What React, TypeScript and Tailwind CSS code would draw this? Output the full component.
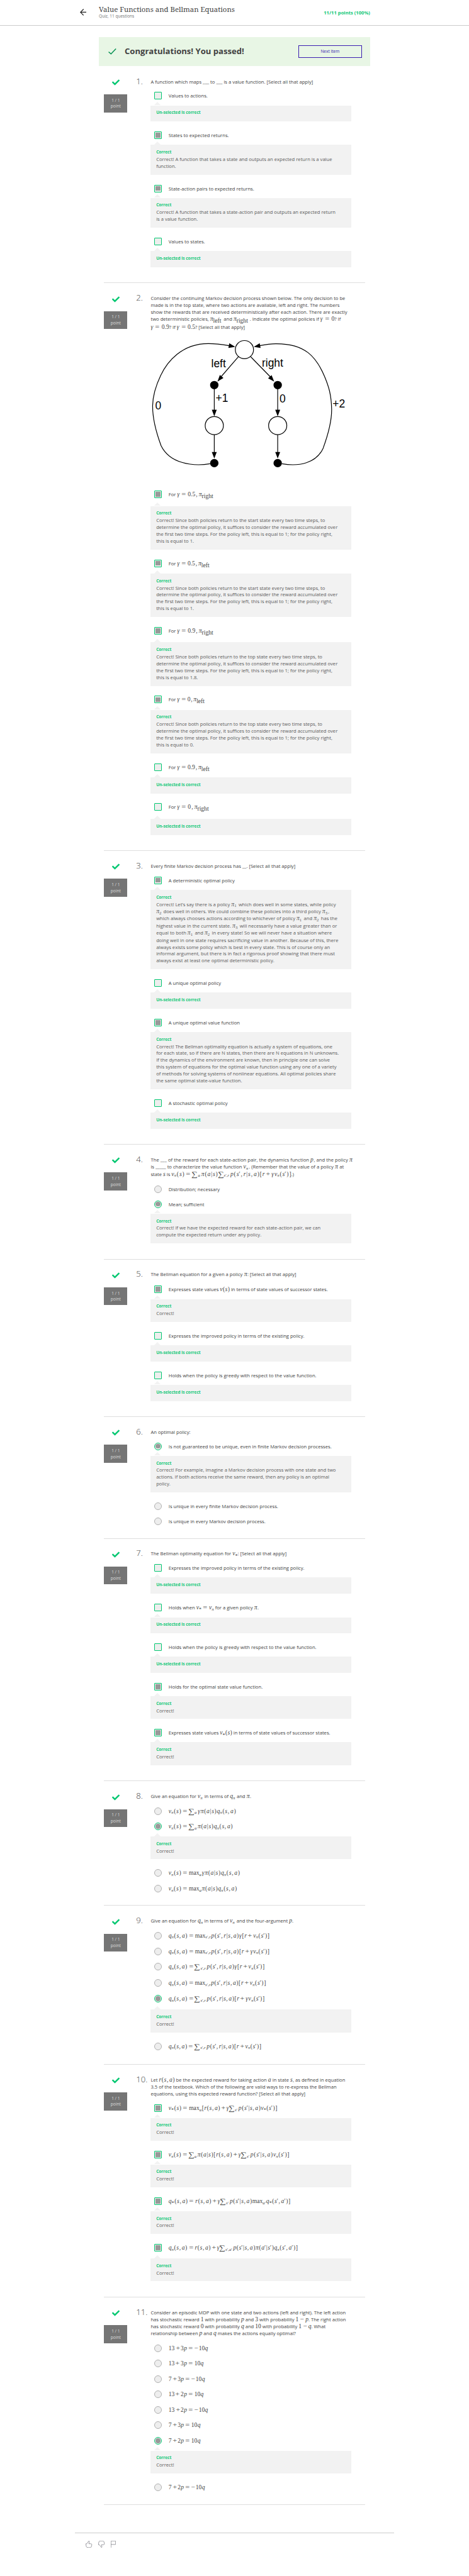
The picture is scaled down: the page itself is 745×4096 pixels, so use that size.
import React from "react";
import { FaCheck } from "react-icons/fa";

/* ---------- math typesetting ---------- */

const ATOM = /(max|left|right|\d+(?:\.\d+)?|[^\s_])(′?)(?:_(?:\{([^}]*)\}|(\S)))?/g;

function Glyph({ t }: { t: string }) {
  if (t === "=") return <span className="mx-[2.8px] inline-block scale-x-[1.3]">=</span>;
  if (t === "+") return <span className="mx-[1.8px] inline-block scale-x-[1.3]">+</span>;
  if (t === "−") return <span className="mx-[0.6px] inline-block scale-x-[1.2]">−</span>;
  if (t === ",") return <span className="mr-[1px]">,</span>;
  if (t === "∑") return <span className="mr-[0.8px] inline-block translate-y-[0.6px] scale-x-[1.2] text-[11.4px]">∑</span>;
  if (/^[a-zπγ]$/.test(t)) return <span className="italic">{t}</span>;
  return <span>{t}</span>;
}

function Sub({ t }: { t: string }) {
  if (t === "left" || t === "right") return <span className="relative top-[3px]">{t}</span>;
  return (
    <span className={t === "*" ? "relative top-[3.4px] text-[8px]" : "relative top-[1.8px] text-[6.8px]"}>
      {t.split("").map((c, i) => (
        <span key={i} className={/[a-zπ]/.test(c) ? "italic" : ""}>{c}</span>
      ))}
    </span>
  );
}

function M({ t, w = "" }: { t: string; w?: string }) {
  const atoms = [...t.matchAll(ATOM)];
  return (
    <span className={`inline-flex items-baseline justify-between whitespace-nowrap font-['Liberation_Serif',serif] text-[9.6px] leading-[0] ${w}`}>
      {atoms.map((a, i) => (
        <span key={i} className={a[1] === "∑" ? "mr-[1px]" : ""}>
          <Glyph t={a[1]} />
          {a[2]}
          {(a[3] || a[4]) && <Sub t={a[3] || a[4]} />}
        </span>
      ))}
    </span>
  );
}

/* ---------- building blocks ---------- */

type Line = React.ReactNode | [string, React.ReactNode];

function Lines({ lines }: { lines: Line[] }) {
  return (
    <>
      {lines.map((l, i) => {
        const tall = Array.isArray(l);
        return (
          <p key={i} className={`whitespace-nowrap leading-[10.9px] ${tall ? l[0] : "h-[10.9px]"}`}>
            {tall ? l[1] : l}
          </p>
        );
      })}
    </>
  );
}

function Feedback({ title, lines = [] }: { title: string; lines?: Line[] }) {
  return (
    <div className="relative mb-[15.81px] w-[318.5px] bg-[#f2f2f2] pt-[6.7px] pr-4 pb-[8.02px] pl-[8.7px] text-[#5a5a5a]">
      <span className="absolute -top-[5.45px] left-[5.8px] h-0 w-0 border-x-[5.45px] border-b-[5.45px] border-x-transparent border-b-[#f2f2f2]" />
      <p className="h-[10.9px] text-[6.54px] leading-[10.9px] font-bold text-[#10c877]">{title}</p>
      <Lines lines={lines} />
    </div>
  );
}

type OptionProps = {
  radio?: boolean;
  on?: boolean;
  h?: string;
  label: React.ReactNode;
  correct?: Line[];
  off?: boolean;
};

function Option({ radio, on, h = "h-[21.26px]", label, correct, off }: OptionProps) {
  const shape = radio ? "rounded-full" : "rounded-[1px]";
  const border = radio && !on ? "border-[0.6px] border-[#b0b0b0]" : "border-[1.1px] border-[#00c770]";
  return (
    <>
      <div className={`flex items-start ${h}`}>
        <span className={`ml-[5.45px] flex h-[12px] w-[12px] shrink-0 items-center justify-center bg-[#eeeeee] ${border} ${shape}`}>
          {on && <span className={`h-[7.6px] w-[7.6px] bg-[#999999] ${radio ? "rounded-full" : ""}`} />}
        </span>
        <span className="ml-[10.9px] h-[12px] whitespace-nowrap leading-[12px]">{label}</span>
      </div>
      {correct && <Feedback title="Correct" lines={correct} />}
      {off && <Feedback title="Un-selected is correct" />}
    </>
  );
}

function Question({ n, prompt, figure, children }: { n: number; prompt: Line[]; figure?: React.ReactNode; children: React.ReactNode }) {
  return (
    <section className="border-b-[1px] border-[#dedede] pt-[18.63px] pb-[8.72px]">
      <div className="flex items-start">
        <div className="flex w-[37.1px] shrink-0 flex-col items-center pt-[0.6px]">
          <FaCheck className="h-[12px] w-[12px] text-[#00c770]" />
          <div className="mt-[13.2px] flex h-[28.3px] w-full flex-col items-center justify-center bg-[#757575] text-[6.54px] leading-[9.8px] text-[#dedede]">
            <span>1 / 1</span>
            <span>point</span>
          </div>
        </div>
        <div className="ml-[14px] w-[23.1px] shrink-0 whitespace-nowrap text-[13.1px] leading-[8.83px] font-light">{n}.</div>
        <div className="w-[318.5px]">
          <div className={figure ? "" : "mb-[11.1px]"}>
            <Lines lines={prompt} />
          </div>
          {figure}
          {children}
        </div>
      </div>
    </section>
  );
}

/* ---------- transition graph ---------- */

function Graph() {
  return (
    <svg viewBox="439 963.6 584 445" preserveAspectRatio="none" className="mb-[12px] block h-[242.6px] w-[318.5px] font-['Liberation_Sans',sans-serif]">
      <g fill="none" stroke="#000" strokeWidth="2.2">
        <circle cx="712.7" cy="1018.5" r="26.5" />
        <circle cx="624.9" cy="1240.1" r="26.5" />
        <circle cx="809.6" cy="1240.1" r="26.5" />
        <path d="M695.3 1039.2L640 1103M731 1039.2L793 1103M624.9 1122V1200M809.6 1122V1200M624.9 1266.6V1325M809.6 1266.6V1325" />
        <path d="M612.7 1351.5C560 1360 495 1350 470 1298.7C452 1250 445 1215 445.3 1182C446 1150 454 1125 468.8 1094C487 1055 530 1000 609 1001C630 1001 650 1004 668 1007" />
        <path d="M821.8 1351.5C872 1360 922 1350 942 1306C958 1262 967 1225 966.7 1193C966 1150 958 1125 945.8 1096C922 1040 890 1001 805.5 1001.3C788 1001 772 1004 757 1007" />
      </g>
      <g fill="#000">
        <circle cx="624.9" cy="1121.9" r="12.2" />
        <circle cx="809.6" cy="1121.9" r="12.2" />
        <circle cx="624.9" cy="1349.5" r="12.2" />
        <circle cx="809.6" cy="1349.5" r="12.2" />
        <path d="M634.1 1111.5L641.2 1092.4L651.6 1101.2ZM799.4 1111.5L791.8 1093L781.6 1102Z" />
        <path d="M624.9 1213L617.7 1193.8H632.1ZM809.6 1213L802.4 1193.8H816.8ZM624.9 1336L617.7 1317H632.1ZM809.6 1336L802.4 1317H816.8Z" />
        <path d="M686 1010.5L668.6 1000L666 1013.4ZM740 1010.5L757.2 1000L759.8 1013.4Z" />
        <g fontSize="32">
          <text x="616" y="1070.6">left</text>
          <text x="763.5" y="1068.3">right</text>
          <text x="629" y="1171.2">+1</text>
          <text x="815" y="1172.8">0</text>
          <text x="452.8" y="1193.8">0</text>
          <text x="969.3" y="1188">+2</text>
        </g>
      </g>
    </svg>
  );
}

const twoSteps = (state: string, total: string): Line[] => [
  `Correct! Since both policies return to the ${state} state every two time steps, to`,
  "determine the optimal policy, it suffices to consider the reward accumulated over",
  "the first two time steps. For the policy left, this is equal to 1; for the policy right,",
  `this is equal to ${total}.`,
];

const PI = <M t="π" w="w-[5.5px] pl-[0.3px]" />;
const T = "h-[11.45px]";

export default function App() {
  return (
    <div className="h-[4096px] w-[745px] overflow-hidden bg-white font-['Open_Sans',sans-serif] text-[7.635px] text-[#424242]">
      <header className="h-[41px] border-b border-[#cccccc]">
        <div className="mx-auto flex h-full w-[492px] items-start">
          <svg viewBox="0 0 20 20" className="mt-[14.2px] h-[10.9px] w-[10.9px]" fill="none" stroke="#1f1f1f" strokeWidth="2.2">
            <path d="M10.5 1L1.5 10L10.5 19M1.5 10H20" />
          </svg>
          <div className="ml-[19.7px] flex flex-col">
            <h1 className="mt-[8.5px] mb-[0.8px] whitespace-nowrap font-['Noto_Serif','DejaVu_Serif_Condensed',serif] text-[11.38px] leading-[12px]">
              Value Functions and Bellman Equations
            </h1>
            <span className="text-[6.54px] leading-[10px] text-[#757575]">Quiz, 11 questions</span>
          </div>
          <span className="mt-[15px] mr-[30.6px] ml-auto whitespace-nowrap leading-[11px] font-bold text-[#10c877]">
            11/11 points (100%)
          </span>
        </div>
      </header>

      <div className="mx-auto mt-[17.9px] flex h-[45.8px] w-[430.85px] items-center bg-[#e8f6e5] pr-[13.2px] pl-[15.3px]">
        <svg viewBox="0 0 24 18" className="h-[9.8px] w-[13px]" fill="none" stroke="#008f4f" strokeWidth="2.6">
          <path d="M1 10L8 16.2L22.5 1" />
        </svg>
        <span className="ml-[12.6px] whitespace-nowrap text-[13.1px] font-bold">Congratulations! You passed!</span>
        <button className="ml-auto h-[19.6px] w-[100.8px] border border-[#3a1db0] text-[6.54px] text-[#3a1db0]">Next Item</button>
      </div>

      <main className="mx-auto w-[414.5px] pt-[1.2px]">
        <Question n={1} prompt={["A function which maps ___ to ___ is a value function. [Select all that apply]"]}>
          <Option off label="Values to actions." />
          <Option on label="States to expected returns." correct={["Correct! A function that takes a state and outputs an expected return is a value", "function."]} />
          <Option on label="State-action pairs to expected returns." correct={["Correct! A function that takes a state-action pair and outputs an expected return", "is a value function."]} />
          <Option off label="Values to states." />
        </Question>

        <Question
          n={2}
          figure={<Graph />}
          prompt={[
            "Consider the continuing Markov decision process shown below. The only decision to be",
            "made is in the top state, where two actions are available, left and right. The numbers",
            "show the rewards that are received deterministically after each action. There are exactly",
            ["h-[13.08px]", <>two deterministic policies, <M t="π_{left}" w="mr-[1.6px] w-[18px]" /> and <M t="π_{right}" w="mr-[0.6px] w-[25.2px]" />. Indicate the optimal policies if <M t="γ = 0" w="w-[22.6px]" />? If</>],
            <><M t="γ = 0.9" w="w-[29.3px]" />? If <M t="γ = 0.5" w="w-[29.3px]" />? [Select all that apply]</>,
          ]}
        >
          <Option on h="h-[24.53px]" label={<>For <M t="γ = 0.5 , π_{right}" w="w-[57.3px]" /></>} correct={twoSteps("start", "1")} />
          <Option on h="h-[22.35px]" label={<>For <M t="γ = 0.5 , π_{left}" w="w-[51.3px]" /></>} correct={twoSteps("start", "1")} />
          <Option on h="h-[24.53px]" label={<>For <M t="γ = 0.9 , π_{right}" w="w-[57.3px]" /></>} correct={twoSteps("top", "1.8")} />
          <Option on h="h-[22.35px]" label={<>For <M t="γ = 0 , π_{left}" w="w-[43.6px]" /></>} correct={twoSteps("top", "0")} />
          <Option off h="h-[22.35px]" label={<>For <M t="γ = 0.9 , π_{left}" w="w-[51.3px]" /></>} />
          <Option off h="h-[24.53px]" label={<>For <M t="γ = 0 , π_{right}" w="w-[50.2px]" /></>} />
        </Question>

        <Question n={3} prompt={["Every finite Markov decision process has __. [Select all that apply]"]}>
          <Option
            on
            label="A deterministic optimal policy"
            correct={[
              [T, <>Correct! Let’s say there is a policy <M t="π_1" w="w-[9.6px]" /> which does well in some states, while policy</>],
              [T, <><M t="π_2" w="w-[9.5px]" /> does well in others. We could combine these policies into a third policy <M t="π_3" w="w-[9.5px]" />,</>],
              [T, <>which always chooses actions according to whichever of policy <M t="π_1" w="w-[9.6px]" /> and <M t="π_2" w="w-[9.6px]" /> has the</>],
              [T, <>highest value in the current state. <M t="π_3" w="w-[9.6px]" /> will necessarily have a value greater than or</>],
              [T, <>equal to both <M t="π_1" w="w-[9.6px]" /> and <M t="π_2" w="w-[9.6px]" /> in every state! So we will never have a situation where</>],
              "doing well in one state requires sacrificing value in another. Because of this, there",
              "always exists some policy which is best in every state. This is of course only an",
              "informal argument, but there is in fact a rigorous proof showing that there must",
              "always exist at least one optimal deterministic policy.",
            ]}
          />
          <Option off label="A unique optimal policy" />
          <Option
            on
            label="A unique optimal value function"
            correct={[
              "Correct! The Bellman optimality equation is actually a system of equations, one",
              "for each state, so if there are N states, then there are N equations in N unknowns.",
              "If the dynamics of the environment are known, then in principle one can solve",
              "this system of equations for the optimal value function using any one of a variety",
              "of methods for solving systems of nonlinear equations. All optimal policies share",
              "the same optimal state-value function.",
            ]}
          />
          <Option off label="A stochastic optimal policy" />
        </Question>

        <Question
          n={4}
          prompt={[
            ["h-[11.45px] tracking-[0.04px]", <>The ___ of the reward for each state-action pair, the dynamics function <M t="p" w="w-[5.3px]" />, and the policy {PI}</>],
            [T, <>is _____ to characterize the value function <M t="v_π" w="w-[8.8px]" />. (Remember that the value of a policy {PI} at</>],
            ["h-[12px]", <>state <M t="s" /> is <M t="v_π(s) = ∑_a π(a|s) ∑_{s′,r} p(s′,r|s,a)[r + γ v_π(s′)]" w="w-[190.4px]" />.)</>],
          ]}
        >
          <Option radio h="h-[23.99px]" label="Distribution; necessary" />
          <Option radio on label="Mean; sufficient" correct={["Correct! If we have the expected reward for each state-action pair, we can", "compute the expected return under any policy."]} />
        </Question>

        <Question n={5} prompt={[[T, <>The Bellman equation for a given a policy {PI}: [Select all that apply]</>]]}>
          <Option on h="h-[21.8px]" label={<>Expresses state values <M t="v(s)" w="w-[15.6px]" /> in terms of state values of successor states.</>} correct={["Correct!"]} />
          <Option off label="Expresses the improved policy in terms of the existing policy." />
          <Option off label="Holds when the policy is greedy with respect to the value function." />
        </Question>

        <Question n={6} prompt={["An optimal policy:"]}>
          <Option
            radio
            on
            label="Is not guaranteed to be unique, even in finite Markov decision processes."
            correct={[
              "Correct! For example, imagine a Markov decision process with one state and two",
              "actions. If both actions receive the same reward, then any policy is an optimal",
              "policy.",
            ]}
          />
          <Option radio h="h-[23.99px]" label="Is unique in every finite Markov decision process." />
          <Option radio h="h-[23.99px]" label="Is unique in every Markov decision process." />
        </Question>

        <Question n={7} prompt={[<>The Bellman optimality equation for <M t="v_*" />: [Select all that apply]</>]}>
          <Option off label="Expresses the improved policy in terms of the existing policy." />
          <Option off h="h-[21.8px]" label={<>Holds when <M t="v_* = v_π" w="w-[28px]" /> for a given policy {PI}.</>} />
          <Option off label="Holds when the policy is greedy with respect to the value function." />
          <Option on label="Holds for the optimal state value function." correct={["Correct!"]} />
          <Option on label={<>Expresses state values <M t="v_*(s)" w="w-[19.4px]" /> in terms of state values of successor states.</>} correct={["Correct!"]} />
        </Question>

        <Question n={8} prompt={[[T, <>Give an equation for <M t="v_π" w="w-[8.8px]" /> in terms of <M t="q_π" w="w-[8.8px]" /> and {PI}.</>]]}>
          <Option radio h="h-[24.53px]" label={<M t="v_π(s) = ∑_a γπ(a|s)q_π(s,a)" w="w-[106.9px]" />} />
          <Option radio on h="h-[21.8px]" label={<M t="v_π(s) = ∑_a π(a|s)q_π(s,a)" w="w-[102px]" />} correct={["Correct!"]} />
          <Option radio h="h-[24.53px]" label={<M t="v_π(s) = max_a γπ(a|s)q_π(s,a)" w="w-[113.4px]" />} />
          <Option radio h="h-[23.99px]" label={<M t="v_π(s) = max_a π(a|s)q_π(s,a)" w="w-[108.5px]" />} />
        </Question>

        <Question n={9} prompt={[[T, <>Give an equation for <M t="q_π" w="w-[8.7px]" /> in terms of <M t="v_π" w="w-[8.7px]" /> and the four-argument <M t="p" />.</>]]}>
          <Option radio h="h-[25.08px]" label={<M t="q_π(s,a) = max_{s′,r} p(s′,r|s,a)γ[r + v_π(s′)]" w="w-[160.3px]" />} />
          <Option radio h="h-[24.53px]" label={<M t="q_π(s,a) = max_{s′,r} p(s′,r|s,a)[r + γv_π(s′)]" w="w-[160.3px]" />} />
          <Option radio h="h-[26.17px]" label={<M t="q_π(s,a) = ∑_{s′,r} p(s′,r|s,a)γ[r + v_π(s′)]" w="w-[152.5px]" />} />
          <Option radio h="h-[24.53px]" label={<M t="q_π(s,a) = max_{s′,r} p(s′,r|s,a)[r + v_π(s′)]" w="w-[154.9px]" />} />
          <Option radio on h="h-[23.44px]" label={<M t="q_π(s,a) = ∑_{s′,r} p(s′,r|s,a)[r + γv_π(s′)]" w="w-[152.5px]" />} correct={["Correct!"]} />
          <Option radio h="h-[25.62px]" label={<M t="q_π(s,a) = ∑_{s′,r} p(s′,r|s,a)[r + v_π(s′)]" w="w-[147.3px]" />} />
        </Question>

        <Question
          n={10}
          prompt={[
            [T, <>Let <M t="r(s,a)" w="w-[25.2px]" /> be the expected reward for taking action <M t="a" w="w-[5.1px]" /> in state <M t="s" w="w-[4.2px]" />, as defined in equation</>],
            "3.5 of the textbook. Which of the following are valid ways to re-express the Bellman",
            "equations, using this expected reward function? [Select all that apply]",
          ]}
        >
          <Option on h="h-[21.8px]" label={<M t="v_*(s) = max_a[r(s,a) + γ∑_{s′} p(s′|s,a)v_*(s′)]" w="w-[172.9px]" />} correct={["Correct!"]} />
          <Option on h="h-[21.8px]" label={<M t="v_π(s) = ∑_a π(a|s)[r(s,a) + γ∑_{s′} p(s′|s,a)v_π(s′)]" w="w-[192.3px]" />} correct={["Correct!"]} />
          <Option on h="h-[21.8px]" label={<M t="q_*(s,a) = r(s,a) + γ∑_{s′} p(s′|s,a) max_{a′} q_*(s′,a′)]" w="w-[193.6px]" />} correct={["Correct!"]} />
          <Option on h="h-[22.9px]" label={<M t="q_π(s,a) = r(s,a) + γ∑_{s′,a′} p(s′|s,a)π(a′|s′)q_π(s′,a′)]" w="w-[205.6px]" />} correct={["Correct!"]} />
        </Question>

        <Question
          n={11}
          prompt={[
            "Consider an episodic MDP with one state and two actions (left and right). The left action",
            ["h-[11.2px]", <>has stochastic reward <M t="1" /> with probability <M t="p" /> and <M t="3" /> with probability <M t="1 − p" w="w-[20.5px]" />. The right action</>],
            [T, <>has stochastic reward <M t="0" /> with probability <M t="q" /> and <M t="10" /> with probability <M t="1 − q" w="w-[20.3px]" />. What</>],
            [T, <>relationship between <M t="p" /> and <M t="q" /> makes the actions equally optimal?</>],
          ]}
        >
          <Option radio h="h-[24.53px]" label={<M t="13 + 3p = −10q" w="w-[62.7px]" />} />
          <Option radio h="h-[24.53px]" label={<M t="13 + 3p = 10q" w="w-[55.6px]" />} />
          <Option radio h="h-[24.53px]" label={<M t="7 + 3p = −10q" w="w-[57.8px]" />} />
          <Option radio h="h-[24.53px]" label={<M t="13 + 2p = 10q" w="w-[55.6px]" />} />
          <Option radio h="h-[24.53px]" label={<M t="13 + 2p = −10q" w="w-[62.7px]" />} />
          <Option radio h="h-[24.53px]" label={<M t="7 + 3p = 10q" w="w-[50.7px]" />} />
          <Option radio on h="h-[21.8px]" label={<M t="7 + 2p = 10q" w="w-[50.7px]" />} correct={["Correct!"]} />
          <Option radio h="h-[24.53px]" label={<M t="7 + 2p = −10q" w="w-[57.8px]" />} />
        </Question>
      </main>

      <footer className="mx-auto mt-[43.6px] flex w-[507.2px] items-start border-t border-[#cccccc] pt-[12.4px] pl-[17.3px] text-[#4d4d58]">
        <svg viewBox="0 0 20 21" className="h-[11.45px] w-[10.9px]" fill="none" stroke="currentColor" strokeWidth="1">
          <path d="M0.5 8.7H3.5L9 0.9Q11 0.5 10.8 2.6Q10.5 5 9.5 8.7H15.5Q18.5 9 18 12L16.8 17.2Q15.8 19.7 13.5 19.7H6Q3.2 19.7 2 17Z" />
        </svg>
        <svg viewBox="0 0 20 21" className="ml-[9.3px] h-[11.45px] w-[10.9px]" fill="none" stroke="currentColor" strokeWidth="1">
          <path d="M0.5 11.5H3.5L9 19.3Q11 19.7 10.8 17.6Q10.5 15.2 9.5 11.5H15.5Q18.5 11.2 18 8.2L16.8 3Q15.8 0.5 13.5 0.5H6Q3.2 0.5 2 3.2Z" />
        </svg>
        <svg viewBox="0 0 15 21" className="ml-[8.7px] h-[11.45px] w-[8.2px]" fill="none" stroke="currentColor" strokeWidth="1">
          <path d="M0.5 20V0.5H14V10.7H0.5" />
        </svg>
      </footer>
    </div>
  );
}
